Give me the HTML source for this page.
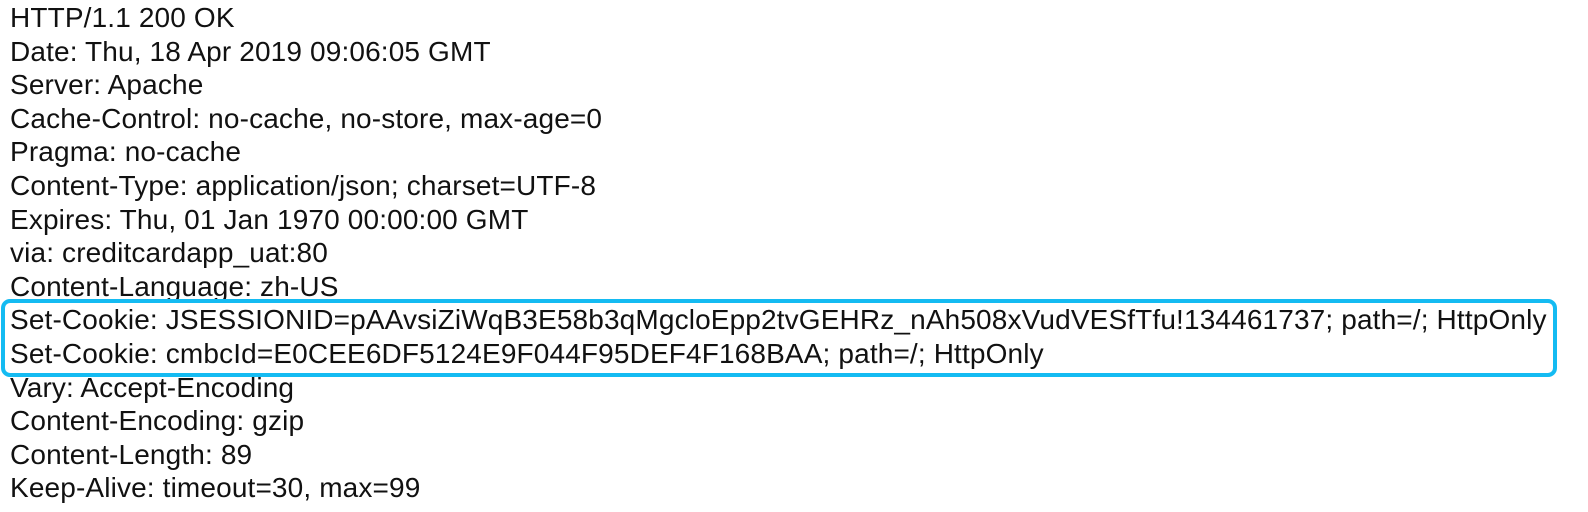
<!DOCTYPE html>
<html><head><meta charset="utf-8"><style>
html,body{margin:0;padding:0;background:#fff;width:1588px;height:512px;overflow:hidden}
.t,.in{position:absolute;left:10px;font-family:"Liberation Sans",Arial,sans-serif;font-size:28px;letter-spacing:0.14px;line-height:33.6px;color:#111;white-space:pre}
.t{top:1px}
.in{top:303px}
.box{position:absolute;left:1px;top:299px;width:1548px;height:70px;border:4px solid #14bbf2;border-radius:9px;background:#fff}
</style></head><body>
<div class="t">HTTP/1.1 200 OK
Date: Thu, 18 Apr 2019 09:06:05 GMT
Server: Apache
Cache-Control: no-cache, no-store, max-age=0
Pragma: no-cache
Content-Type: application/json; charset=UTF-8
Expires: Thu, 01 Jan 1970 00:00:00 GMT
via: creditcardapp_uat:80
Content-Language: zh-US
Set-Cookie: JSESSIONID=pAAvsiZiWqB3E58b3qMgcloEpp2tvGEHRz_nAh508xVudVESfTfu!134461737; path=/; HttpOnly
Set-Cookie: cmbcId=E0CEE6DF5124E9F044F95DEF4F168BAA; path=/; HttpOnly
Vary: Accept-Encoding
Content-Encoding: gzip
Content-Length: 89
Keep-Alive: timeout=30, max=99</div>
<div class="box"></div>
<div class="in">Set-Cookie: JSESSIONID=pAAvsiZiWqB3E58b3qMgcloEpp2tvGEHRz_nAh508xVudVESfTfu!134461737; path=/; HttpOnly
Set-Cookie: cmbcId=E0CEE6DF5124E9F044F95DEF4F168BAA; path=/; HttpOnly</div>
</body></html>
